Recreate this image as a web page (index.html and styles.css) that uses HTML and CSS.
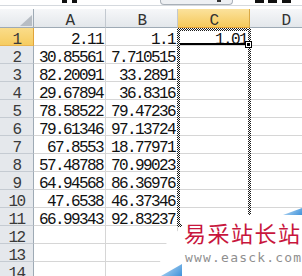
FILE: index.html
```
<!DOCTYPE html>
<html>
<head>
<meta charset="utf-8">
<link rel="stylesheet" href="styles.css">
</head>
<body>
<div class="topbar">
  <span class="mk mk-a"></span>
  <span class="mk mk-b"></span>
  <div class="fbox"><span class="mk mk-f"></span></div>
  <span class="mk mk-r1"></span>
  <span class="mk mk-r2"></span>
  <span class="mk mk-r3"></span>
</div>
<div class="sheet">
  <div class="grid">
    <div class="h corner"><span class="tri"></span></div>
    <div class="h">A</div>
    <div class="h">B</div>
    <div class="h hsel">C</div>
    <div class="h">D</div>

    <div class="rh rsel">1</div><div class="c">2.11</div><div class="c">1.1</div><div class="c">1.01</div><div class="c"></div>
    <div class="rh">2</div><div class="c">30.85561</div><div class="c">7.710515</div><div class="c"></div><div class="c"></div>
    <div class="rh">3</div><div class="c">82.20091</div><div class="c">33.2891</div><div class="c"></div><div class="c"></div>
    <div class="rh">4</div><div class="c">29.67894</div><div class="c">36.8316</div><div class="c"></div><div class="c"></div>
    <div class="rh">5</div><div class="c">78.58522</div><div class="c">79.47236</div><div class="c"></div><div class="c"></div>
    <div class="rh">6</div><div class="c">79.61346</div><div class="c">97.13724</div><div class="c"></div><div class="c"></div>
    <div class="rh">7</div><div class="c">67.8553</div><div class="c">18.77971</div><div class="c"></div><div class="c"></div>
    <div class="rh">8</div><div class="c">57.48788</div><div class="c">70.99023</div><div class="c"></div><div class="c"></div>
    <div class="rh">9</div><div class="c">64.94568</div><div class="c">86.36976</div><div class="c"></div><div class="c"></div>
    <div class="rh">10</div><div class="c">47.6538</div><div class="c">46.37346</div><div class="c"></div><div class="c"></div>
    <div class="rh">11</div><div class="c">66.99343</div><div class="c">92.83237</div><div class="c"></div><div class="c"></div>
    <div class="rh">12</div><div class="c"></div><div class="c"></div><div class="c"></div><div class="c"></div>
    <div class="rh">13</div><div class="c"></div><div class="c"></div><div class="c"></div><div class="c"></div>
    <div class="rh">14</div><div class="c"></div><div class="c"></div><div class="c"></div><div class="c"></div>
  </div>
  <div class="ants">
    <span class="ant ant-t"></span>
    <span class="ant ant-b"></span>
    <span class="ant ant-l"></span>
    <span class="ant ant-r"></span>
  </div>
  <div class="active-line"></div>
  <div class="handle"></div>
</div>
<div class="watermark">
  <div class="wm-bg"></div>
  <span class="wm-tri wm-tri-tr"></span>
  <span class="wm-tri wm-tri-bl"></span>
  <div class="wm-cn">易采站长站</div>
  <div class="wm-url">www.easck.com</div>
</div>
</body>
</html>
```
FILE: styles.css
```
* { box-sizing: border-box; }
html, body { margin: 0; padding: 0; }
body {
  width: 302px;
  height: 276px;
  overflow: hidden;
  background: #fff;
  position: relative;
  font-family: "Liberation Mono", "Courier New", monospace;
}

/* formula bar remnants */
.topbar {
  height: 9px;
  display: flex;
  align-items: flex-start;
  background: linear-gradient(to bottom, transparent 5px, #d5d9de 5px, #d5d9de 6px, transparent 6px);
}
.mk { display: block; height: 3px; background: #111; }
.mk-a { margin-left: 62px; width: 5px; }
.mk-b { margin-left: 5px; width: 5px; }
.fbox {
  margin-left: 83px;
  width: 73px;
  height: 5px;
  border: 1px solid #a9b0b8;
  border-top: none;
  border-radius: 0 0 4px 4px;
  background: #eef0f3;
  display: flex;
}
.mk-f { margin-left: 56px; width: 4px; height: 2px; background: #333; }
.mk-r1 { margin-left: 22px; width: 9px; }
.mk-r2 { margin-left: 4px; width: 9px; }
.mk-r3 { margin-left: 5px; width: 9px; }

/* sheet */
.sheet { position: relative; }
.grid {
  display: grid;
  grid-template-columns: 34px 72px 72px 72px 72px;
  grid-template-rows: 19px repeat(14, 18px);
  font-family: "Liberation Mono", "Courier New", monospace;
  font-size: 16px;
  font-weight: 400;
  letter-spacing: -1.6px;
  line-height: 25px;
}
.c {
  border-right: 1px solid #d6d6d6;
  border-bottom: 1px solid #d6d6d6;
  text-align: right;
  padding-right: 2px;
  color: #111;
  white-space: nowrap;
}
.h {
  background: linear-gradient(#f6f7f9, #e3e7eb);
  border-right: 1px solid #c3c9d0;
  border-bottom: 1px solid #9eaab5;
  text-align: center;
  color: #333;
}
.hsel {
  background: linear-gradient(#fbe29c, #f5c95b);
  border-bottom-color: #e0a33a;
  border-right-color: #d9a845;
}
.corner {
  display: flex;
  justify-content: flex-end;
  align-items: flex-end;
  padding: 0 1px 1px 0;
  border-right-color: #9eaab5;
}
.tri {
  display: block;
  width: 12px;
  height: 11px;
  background: #b7bdc4;
  clip-path: polygon(100% 0, 100% 100%, 0 100%);
}
.rh {
  background: #e5e8ec;
  border-right: 1px solid #9eaab5;
  border-bottom: 1px solid #c5cbd2;
  text-align: center;
  color: #3a3a3a;
}
.rsel {
  background: linear-gradient(#fadc8a, #f6cc60);
  border-right-color: #e0a33a;
  border-bottom-color: #e9b552;
}

/* copy marquee over column C */
.ants {
  position: absolute;
  left: 177px;
  top: 19px;
  width: 74px;
  height: 199px;
}
.ant {
  position: absolute;
  background: repeating-conic-gradient(#1a1a1a 0 25%, #fff 0 50%) 0 0 / 2px 2px;
}
.ant-t { left: 0; right: 0; top: 0; height: 3px; }
.ant-b { left: 0; right: 0; bottom: 0; height: 3px; }
.ant-l { left: 0; top: 0; bottom: 0; width: 3px; }
.ant-r { right: 0; top: 0; bottom: 0; width: 3px; }

.active-line {
  position: absolute;
  left: 180px;
  top: 34px;
  width: 67px;
  height: 2px;
  background: #000;
}
.handle {
  position: absolute;
  left: 246px;
  top: 33px;
  width: 5px;
  height: 5px;
  background: #000;
  border: 1px solid #fff;
  outline: 1px solid #000;
}

/* watermark */
.watermark {
  position: absolute;
  left: 160px;
  top: 208px;
  width: 142px;
  height: 68px;
}
.wm-bg {
  position: absolute;
  inset: 0;
  background: #fff;
  clip-path: polygon(22px 7px, 142px 7px, 142px 68px, 0 68px, 0 54px, 6px 36px, 22px 18px);
}
.wm-tri {
  position: absolute;
  background: linear-gradient(135deg, #c3e0f6, #3f92da);
  clip-path: polygon(100% 0, 100% 100%, 0 100%);
}
.wm-tri-tr { right: 0; top: 0; width: 19px; height: 7px; }
.wm-tri-bl { left: 1px; bottom: 0; width: 21px; height: 12px; }
.wm-cn {
  position: absolute;
  left: 24px;
  top: 13px;
  font-family: "Noto Sans CJK SC", sans-serif;
  font-size: 22px;
  line-height: 22px;
  letter-spacing: 1.5px;
  color: #c8163d;
  white-space: nowrap;
}
.wm-url {
  position: absolute;
  left: 25px;
  top: 43px;
  font-family: "DejaVu Sans Mono", monospace;
  font-size: 13px;
  line-height: 13px;
  letter-spacing: 1.2px;
  color: #8f8f8f;
  white-space: nowrap;
}
```
